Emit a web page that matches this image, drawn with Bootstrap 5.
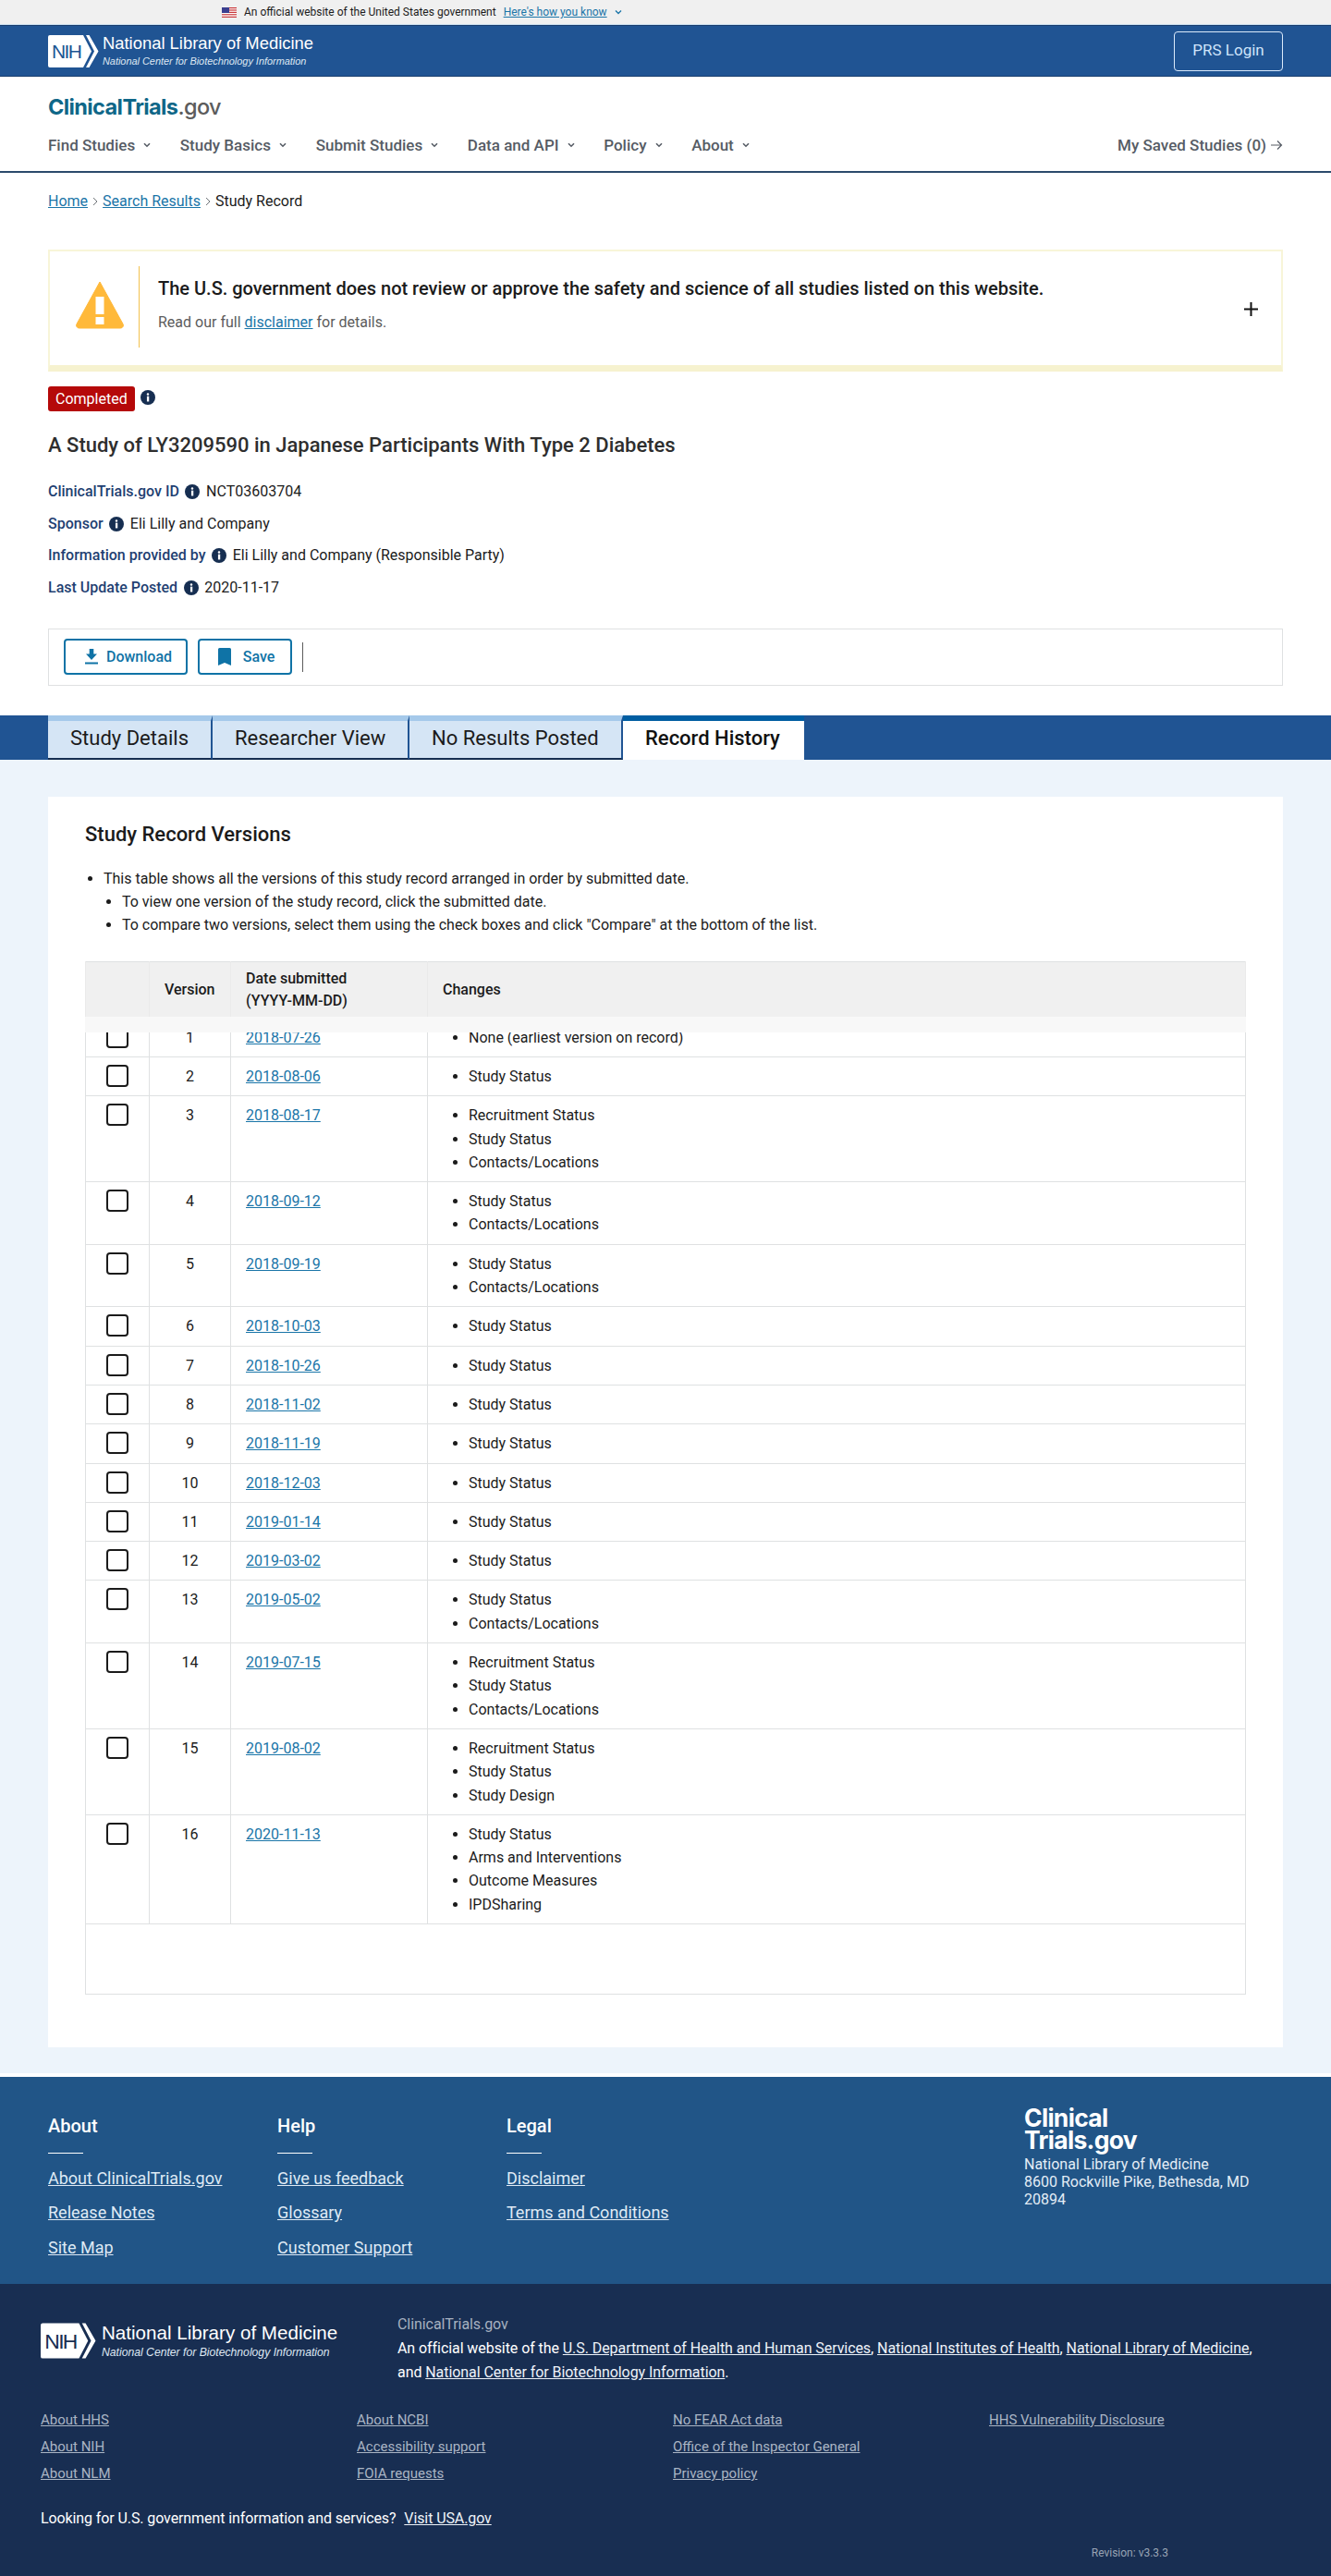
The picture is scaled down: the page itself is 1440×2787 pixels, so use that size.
<!DOCTYPE html>
<html lang="en">
<head>
<meta charset="utf-8">
<title>ClinicalTrials.gov Record History</title>
<link href="https://cdn.jsdelivr.net/npm/bootstrap@5.3.0/dist/css/bootstrap.min.css" rel="stylesheet">
<style>
body{font-family:Roboto,"Liberation Sans",sans-serif;font-size:16px;line-height:24px;color:#1b1b1b;background:#fff}
a{color:#1a75a8}
ul{list-style-type:disc}
.gov-strip{height:27px;background:#f0f0f0;border-bottom:1px solid #cfe3f2;padding-left:240px;font-size:12px;color:#1b1b1b;gap:8px}
.nlm-bar{height:56px;background:#205493;border-top:1px solid #1a3f6f;border-bottom:1px solid #1a3f6f;padding:0 52px}
.logo-title{font-family:"Liberation Sans",Arial,sans-serif;color:#fff;line-height:1}
.logo-top .logo-title{font-size:18.4px}
.logo-top .logo-sub{font-size:10.9px;margin-top:4px}
.logo-sub{font-family:"Liberation Sans",Arial,sans-serif;font-style:italic;color:#dfe8f2;line-height:1}
.logo-bot .logo-title{font-size:20.6px}
.logo-bot .logo-sub{font-size:12.2px;margin-top:4px}
.prs-btn{width:118px;height:43px;border:1px solid #dbeafb;border-radius:4px;color:#cfe4fa;background:transparent;padding:0;font-size:17px}
.site-head{height:104px;border-bottom:2px solid #2b4a6c;padding:17px 52px 0}
.brand-line{font-family:Inter,"Open Sans",sans-serif;font-size:23.5px;line-height:32px;font-weight:700;letter-spacing:-.6px;color:#0f6788}
.brand-line span{color:#5c5c5c;font-weight:500}
.main-menu{margin-top:9px;height:32px;font-size:17px;font-weight:500;color:#565c65}
.main-menu .menu-item{margin-right:31.7px;gap:9px}
.saved{font-weight:500;color:#565c65}
.crumbs{padding:19px 52px 0;height:43px;gap:5px}
.notice{margin:40px 52px 0;height:132px;border:2px solid #f8f5d8;border-bottom:7px solid #f6f2cf;padding:16px 25px 0 28px}
.notice-icon{flex:none}
.notice-div{width:1px;height:88px;background:#f2c14e;margin:0 20px 0 16px}
.notice-title{font-size:20px;font-weight:500;margin-top:12px;color:#1b1b1b}
.notice-sub{color:#5c5c5c;margin-top:13px}
.notice-plus{align-self:center;margin-top:-14px}
.status-wrap{margin:16px 52px 0;gap:6px}
.status-chip{height:27px;padding:0 8px;background:#b50909;color:#fff;border-radius:3px;line-height:27px}
.status-wrap svg{margin-top:-4px}
.study-title{font-size:22px;font-weight:500;line-height:30px;margin:22px 52px 23px;color:#2e2e2e}
.meta-list{margin:0 52px;gap:10.6px}
.meta-label{font-weight:500;color:#1f3f72}
.meta-row{gap:6px}
.meta-row svg{margin:0 .6px}
.action-box{margin:32px 52px 0;height:62px;border:1px solid #dfe1e2;padding:10px 16px;gap:11px}
.act-btn{height:39px;border:2px solid #0f73a6;border-radius:4px;color:#0f73a6;font-weight:500;background:#fff;padding:0;gap:9px}
.act-one{width:134px;padding-left:6px}
.act-two{width:102px;gap:13px;padding-left:3px}
.act-rule{width:1px;height:32px;background:#5c5c5c}
.tabs-band{margin-top:32px;height:48px;background:#205493;padding-left:52px}
.tabs-band .nav-link{height:48px;padding:0 24px;font-size:22px;line-height:38px;color:#1b1b1b;background:#d5e5f5;border-top:6px solid #a5c9ea;border-bottom:2px solid #162e51;border-right:2px solid #205493;border-radius:0;white-space:nowrap}
.tabs-band .nav-link.active{font-weight:500;background:#fff;border-top-color:#005ea2;border-bottom:0;border-right:0;color:#111;width:196px;padding:0 24px}
.tab-a{width:178px}.tab-b{width:213px}.tab-c{width:231px}
.panel-area{background:#edf4fb;padding:40px 52px 28px;margin-bottom:4px}
.sheet{background:#fff;padding:26px 40px 57px}
.sheet h2{font-size:22px;line-height:30px;font-weight:500;margin:0 0 20px;color:#1b1b1b}
.intro{padding-left:20px;margin:0 0 26px;line-height:25.3px}
.intro ul{padding-left:20px;margin:0}
.table-holder{position:relative}
.head-veil{position:absolute;left:0;right:0;top:60px;height:17px;background:#f8f8f8;z-index:2}
.versions{table-layout:fixed;width:100%;margin:0;border-color:#dfe1e2;--bs-table-border-color:#dfe1e2;line-height:25.3px}
.versions thead th{height:60px;padding:6px 16px;background:#f0f0f0;font-weight:500;vertical-align:middle;line-height:24px;border-color:#eaeaea;color:#1b1b1b}
.versions td{padding:8px 16px;vertical-align:top;color:#1b1b1b}
.c-a{width:69px}.c-b{width:88px}.c-c{width:213px}
.versions td.num{text-align:center}
.versions td.pick{padding:8px 0;text-align:center}
.versions ul{padding-left:28px;margin:0}
.tick{width:24px;height:24px;margin:0 auto;border:2px solid #1b1b1b;border-radius:4px;display:block}
.versions .tail{height:76px;padding:0}
.foot-top{height:224px;background:#215587;padding:32px 52px 0}
.foot-col{width:248px;padding-top:7px}
.foot-col h3{font-size:20px;font-weight:500;line-height:28px;margin:0;color:#fff}
.foot-rule{width:38px;height:1px;background:#fff;margin:15px 0 14px}
.foot-col a{display:block;font-size:18px;line-height:26px;margin-bottom:11.5px;color:#dfeaf5}
.foot-addr{width:280px;margin-left:auto;color:#e4edf6}
.foot-brand{font-family:Inter,"Open Sans",sans-serif;font-size:26.5px;line-height:24px;font-weight:700;letter-spacing:-.7px;color:#fff;margin-bottom:5px}
.foot-addr p{line-height:19.2px;margin:0}
.foot-bottom{height:317px;background:#182e52;padding-top:31px;color:#fff}
.fb-top{padding-left:44px}
.fb-logo{width:386px;margin-top:11px;gap:6px}
.fb-logo svg{flex:none}
.fb-text{width:945px;line-height:26px;letter-spacing:-.07px}
.fb-muted{color:#a6b1c0}
.fb-text a{color:#eef3f9}
.fb-links{margin:27px 28px 0 44px}
.fb-links a{display:block;font-size:15px;line-height:22px;margin-bottom:7px;color:#aab5c4}
.fb-usa{padding-left:44px;margin-top:19px;letter-spacing:-.1px}
.fb-usa a{color:#eef3f9;margin-left:5px}
.fb-rev{font-size:12px;line-height:18px;color:#98a4b4;text-align:right;padding-right:176px;margin-top:16px}
</style>
</head>
<body>
<div class="gov-strip d-flex align-items-center">
  <svg width="16" height="11" viewBox="0 0 16 11"><rect width="16" height="11" fill="#fff"/><g fill="#c8373a"><rect width="16" height="1.2"/><rect y="2.4" width="16" height="1.2"/><rect y="4.8" width="16" height="1.2"/><rect y="7.2" width="16" height="1.2"/><rect y="9.8" width="16" height="1.2"/></g><rect width="8" height="6" fill="#3c3f8f"/></svg>
  <span>An official website of the United States government</span>
  <a href="#">Here's how you know</a>
  <svg width="8" height="6" viewBox="0 0 8 6"><path d="M1 1.5l3 3 3-3" fill="none" stroke="#1a75a8" stroke-width="1.3"/></svg>
</div>
<header class="nlm-bar d-flex align-items-center justify-content-between">
  <div class="logo-top d-flex align-items-center gap-1">
    <svg width="55" height="35" viewBox="0 0 55 35"><path d="M2 0h36l9 17.5-9 17.5H2a2 2 0 0 1-2-2V2a2 2 0 0 1 2-2z" fill="#fff"/><path d="M41 0h3.5l10 17.5-10 17.5H41l9-17.5z" fill="#fff"/><text x="4" y="25" font-family="Liberation Sans, Arial, sans-serif" font-size="21" fill="#205493" textLength="33">NIH</text></svg>
    <div>
      <div class="logo-title">National Library of Medicine</div>
      <div class="logo-sub">National Center for Biotechnology Information</div>
    </div>
  </div>
  <button class="btn prs-btn" type="button">PRS Login</button>
</header>
<div class="site-head">
  <div class="brand-line">ClinicalTrials<span>.gov</span></div>
  <nav class="main-menu d-flex align-items-center">
    <div class="menu-item d-flex align-items-center">Find Studies <svg width="8" height="6" viewBox="0 0 8 6"><path d="M1 1.2l3 3 3-3" fill="none" stroke="#565c65" stroke-width="1.6"/></svg></div>
    <div class="menu-item d-flex align-items-center">Study Basics <svg width="8" height="6" viewBox="0 0 8 6"><path d="M1 1.2l3 3 3-3" fill="none" stroke="#565c65" stroke-width="1.6"/></svg></div>
    <div class="menu-item d-flex align-items-center">Submit Studies <svg width="8" height="6" viewBox="0 0 8 6"><path d="M1 1.2l3 3 3-3" fill="none" stroke="#565c65" stroke-width="1.6"/></svg></div>
    <div class="menu-item d-flex align-items-center">Data and API <svg width="8" height="6" viewBox="0 0 8 6"><path d="M1 1.2l3 3 3-3" fill="none" stroke="#565c65" stroke-width="1.6"/></svg></div>
    <div class="menu-item d-flex align-items-center">Policy <svg width="8" height="6" viewBox="0 0 8 6"><path d="M1 1.2l3 3 3-3" fill="none" stroke="#565c65" stroke-width="1.6"/></svg></div>
    <div class="menu-item d-flex align-items-center">About <svg width="8" height="6" viewBox="0 0 8 6"><path d="M1 1.2l3 3 3-3" fill="none" stroke="#565c65" stroke-width="1.6"/></svg></div>
    <div class="saved ms-auto d-flex align-items-center">My Saved Studies (0)<svg width="14" height="12" viewBox="0 0 14 12" class="ms-1"><path d="M1 6h11M8 1.5 12.5 6 8 10.5" fill="none" stroke="#565c65" stroke-width="1.2"/></svg></div>
  </nav>
</div>
<div class="crumbs d-flex align-items-center">
  <a href="#">Home</a>
  <svg width="6" height="10" viewBox="0 0 6 10"><path d="M1 1l4 4-4 4" fill="none" stroke="#71767a" stroke-width="1"/></svg>
  <a href="#">Search Results</a>
  <svg width="6" height="10" viewBox="0 0 6 10"><path d="M1 1l4 4-4 4" fill="none" stroke="#71767a" stroke-width="1"/></svg>
  <span>Study Record</span>
</div>
<section class="notice d-flex align-items-start">
  <svg class="mt-3 notice-icon" width="52" height="52" viewBox="0 0 52 52"><path d="M26 1 51 46.5a3 3 0 0 1-2.6 4.5H3.6A3 3 0 0 1 1 46.5L26 1z" fill="#ffb93a" stroke="#ffb93a" stroke-linejoin="round"/><rect x="21.5" y="17" width="9" height="19" fill="#fff"/><rect x="21.5" y="39" width="9" height="8" fill="#fff"/></svg>
  <div class="notice-div"></div>
  <div>
    <div class="notice-title">The U.S. government does not review or approve the safety and science of all studies listed on this website.</div>
    <div class="notice-sub">Read our full <a href="#">disclaimer</a> for details.</div>
  </div>
  <svg class="notice-plus ms-auto" width="15" height="15" viewBox="0 0 15 15"><path d="M7.5 0v15M0 7.5h15" stroke="#111" stroke-width="2"/></svg>
</section>
<div class="status-wrap d-flex align-items-center">
  <span class="status-chip">Completed</span>
  <svg width="16" height="16" viewBox="0 0 18 18"><circle cx="9" cy="9" r="9" fill="#162e51"/><circle cx="9" cy="5" r="1.4" fill="#fff"/><rect x="7.8" y="7.5" width="2.6" height="6.5" fill="#fff"/></svg>
</div>
<h1 class="study-title">A Study of LY3209590 in Japanese Participants With Type 2 Diabetes</h1>
<div class="meta-list d-flex flex-column">
  <div class="meta-row d-flex align-items-center"><span class="meta-label">ClinicalTrials.gov ID</span><svg width="16" height="16" viewBox="0 0 18 18"><circle cx="9" cy="9" r="9" fill="#162e51"/><circle cx="9" cy="5" r="1.4" fill="#fff"/><rect x="7.8" y="7.5" width="2.6" height="6.5" fill="#fff"/></svg><span>NCT03603704</span></div>
  <div class="meta-row d-flex align-items-center"><span class="meta-label">Sponsor</span><svg width="16" height="16" viewBox="0 0 18 18"><circle cx="9" cy="9" r="9" fill="#162e51"/><circle cx="9" cy="5" r="1.4" fill="#fff"/><rect x="7.8" y="7.5" width="2.6" height="6.5" fill="#fff"/></svg><span>Eli Lilly and Company</span></div>
  <div class="meta-row d-flex align-items-center"><span class="meta-label">Information provided by</span><svg width="16" height="16" viewBox="0 0 18 18"><circle cx="9" cy="9" r="9" fill="#162e51"/><circle cx="9" cy="5" r="1.4" fill="#fff"/><rect x="7.8" y="7.5" width="2.6" height="6.5" fill="#fff"/></svg><span>Eli Lilly and Company (Responsible Party)</span></div>
  <div class="meta-row d-flex align-items-center"><span class="meta-label">Last Update Posted</span><svg width="16" height="16" viewBox="0 0 18 18"><circle cx="9" cy="9" r="9" fill="#162e51"/><circle cx="9" cy="5" r="1.4" fill="#fff"/><rect x="7.8" y="7.5" width="2.6" height="6.5" fill="#fff"/></svg><span>2020-11-17</span></div>
</div>
<div class="action-box d-flex align-items-center">
  <button class="btn act-btn act-one d-flex align-items-center justify-content-center" type="button"><svg width="14" height="17" viewBox="0 0 14 17"><path d="M4.7 0h4.6v5.5H13L7 12 1 5.5h3.7z" fill="#0f73a6"/><rect x="0" y="14.5" width="14" height="2" fill="#0f73a6"/></svg>Download</button>
  <button class="btn act-btn act-two d-flex align-items-center justify-content-center" type="button"><svg width="14" height="19" viewBox="0 0 14 19"><path d="M0 1.5A1.5 1.5 0 0 1 1.5 0h11A1.5 1.5 0 0 1 14 1.5V19l-7-3-7 3z" fill="#0f73a6"/></svg>Save</button>
  <div class="act-rule"></div>
</div>
<ul class="nav tabs-band">
  <li class="nav-item"><a class="nav-link tab-a" href="#">Study Details</a></li>
  <li class="nav-item"><a class="nav-link tab-b" href="#">Researcher View</a></li>
  <li class="nav-item"><a class="nav-link tab-c" href="#">No Results Posted</a></li>
  <li class="nav-item"><a class="nav-link active" href="#">Record History</a></li>
</ul>
<main class="panel-area">
  <div class="sheet">
    <h2>Study Record Versions</h2>
    <ul class="intro">
      <li>This table shows all the versions of this study record arranged in order by submitted date.
        <ul>
          <li>To view one version of the study record, click the submitted date.</li>
          <li>To compare two versions, select them using the check boxes and click "Compare" at the bottom of the list.</li>
        </ul>
      </li>
    </ul>
    <div class="table-holder">
      <div class="head-veil"></div>
      <table class="table table-bordered versions">
        <thead><tr><th class="c-a"></th><th class="c-b">Version</th><th class="c-c">Date submitted<br>(YYYY-MM-DD)</th><th>Changes</th></tr></thead>
        <tbody>
          <tr><td class="pick"><input class="form-check-input tick" type="checkbox"></td><td class="num">1</td><td><a href="#">2018-07-26</a></td><td><ul><li>None (earliest version on record)</li></ul></td></tr>
          <tr><td class="pick"><input class="form-check-input tick" type="checkbox"></td><td class="num">2</td><td><a href="#">2018-08-06</a></td><td><ul><li>Study Status</li></ul></td></tr>
          <tr><td class="pick"><input class="form-check-input tick" type="checkbox"></td><td class="num">3</td><td><a href="#">2018-08-17</a></td><td><ul><li>Recruitment Status</li><li>Study Status</li><li>Contacts/Locations</li></ul></td></tr>
          <tr><td class="pick"><input class="form-check-input tick" type="checkbox"></td><td class="num">4</td><td><a href="#">2018-09-12</a></td><td><ul><li>Study Status</li><li>Contacts/Locations</li></ul></td></tr>
          <tr><td class="pick"><input class="form-check-input tick" type="checkbox"></td><td class="num">5</td><td><a href="#">2018-09-19</a></td><td><ul><li>Study Status</li><li>Contacts/Locations</li></ul></td></tr>
          <tr><td class="pick"><input class="form-check-input tick" type="checkbox"></td><td class="num">6</td><td><a href="#">2018-10-03</a></td><td><ul><li>Study Status</li></ul></td></tr>
          <tr><td class="pick"><input class="form-check-input tick" type="checkbox"></td><td class="num">7</td><td><a href="#">2018-10-26</a></td><td><ul><li>Study Status</li></ul></td></tr>
          <tr><td class="pick"><input class="form-check-input tick" type="checkbox"></td><td class="num">8</td><td><a href="#">2018-11-02</a></td><td><ul><li>Study Status</li></ul></td></tr>
          <tr><td class="pick"><input class="form-check-input tick" type="checkbox"></td><td class="num">9</td><td><a href="#">2018-11-19</a></td><td><ul><li>Study Status</li></ul></td></tr>
          <tr><td class="pick"><input class="form-check-input tick" type="checkbox"></td><td class="num">10</td><td><a href="#">2018-12-03</a></td><td><ul><li>Study Status</li></ul></td></tr>
          <tr><td class="pick"><input class="form-check-input tick" type="checkbox"></td><td class="num">11</td><td><a href="#">2019-01-14</a></td><td><ul><li>Study Status</li></ul></td></tr>
          <tr><td class="pick"><input class="form-check-input tick" type="checkbox"></td><td class="num">12</td><td><a href="#">2019-03-02</a></td><td><ul><li>Study Status</li></ul></td></tr>
          <tr><td class="pick"><input class="form-check-input tick" type="checkbox"></td><td class="num">13</td><td><a href="#">2019-05-02</a></td><td><ul><li>Study Status</li><li>Contacts/Locations</li></ul></td></tr>
          <tr><td class="pick"><input class="form-check-input tick" type="checkbox"></td><td class="num">14</td><td><a href="#">2019-07-15</a></td><td><ul><li>Recruitment Status</li><li>Study Status</li><li>Contacts/Locations</li></ul></td></tr>
          <tr><td class="pick"><input class="form-check-input tick" type="checkbox"></td><td class="num">15</td><td><a href="#">2019-08-02</a></td><td><ul><li>Recruitment Status</li><li>Study Status</li><li>Study Design</li></ul></td></tr>
          <tr><td class="pick"><input class="form-check-input tick" type="checkbox"></td><td class="num">16</td><td><a href="#">2020-11-13</a></td><td><ul><li>Study Status</li><li>Arms and Interventions</li><li>Outcome Measures</li><li>IPDSharing</li></ul></td></tr>
        </tbody>
        <tfoot><tr><td class="tail" colspan="4"></td></tr></tfoot>
      </table>
    </div>
  </div>
</main>
<footer>
  <div class="foot-top d-flex">
    <div class="foot-col"><h3>About</h3><div class="foot-rule"></div><a href="#">About ClinicalTrials.gov</a><a href="#">Release Notes</a><a href="#">Site Map</a></div>
    <div class="foot-col"><h3>Help</h3><div class="foot-rule"></div><a href="#">Give us feedback</a><a href="#">Glossary</a><a href="#">Customer Support</a></div>
    <div class="foot-col"><h3>Legal</h3><div class="foot-rule"></div><a href="#">Disclaimer</a><a href="#">Terms and Conditions</a></div>
    <div class="foot-addr">
      <div class="foot-brand">Clinical<br>Trials.gov</div>
      <p>National Library of Medicine</p>
      <p>8600 Rockville Pike, Bethesda, MD 20894</p>
    </div>
  </div>
  <div class="foot-bottom">
    <div class="fb-top d-flex align-items-start">
      <div class="fb-logo logo-bot d-flex align-items-center">
        <svg width="60" height="39" viewBox="0 0 55 35"><path d="M2 0h36l9 17.5-9 17.5H2a2 2 0 0 1-2-2V2a2 2 0 0 1 2-2z" fill="#fff"/><path d="M41 0h3.5l10 17.5-10 17.5H41l9-17.5z" fill="#fff"/><text x="4" y="25" font-family="Liberation Sans, Arial, sans-serif" font-size="21" fill="#182e52" textLength="33">NIH</text></svg>
        <div><div class="logo-title">National Library of Medicine</div><div class="logo-sub">National Center for Biotechnology Information</div></div>
      </div>
      <div class="fb-text">
        <div class="fb-muted">ClinicalTrials.gov</div>
        <div>An official website of the <a href="#">U.S. Department of Health and Human Services</a>, <a href="#">National Institutes of Health</a>, <a href="#">National Library of Medicine</a>, and <a href="#">National Center for Biotechnology Information</a>.</div>
      </div>
    </div>
    <div class="row g-0 fb-links">
      <div class="col-3"><a href="#">About HHS</a><a href="#">About NIH</a><a href="#">About NLM</a></div>
      <div class="col-3"><a href="#">About NCBI</a><a href="#">Accessibility support</a><a href="#">FOIA requests</a></div>
      <div class="col-3"><a href="#">No FEAR Act data</a><a href="#">Office of the Inspector General</a><a href="#">Privacy policy</a></div>
      <div class="col-3"><a href="#">HHS Vulnerability Disclosure</a></div>
    </div>
    <div class="fb-usa">Looking for U.S. government information and services? <a href="#">Visit USA.gov</a></div>
    <div class="fb-rev">Revision: v3.3.3</div>
  </div>
</footer>
<script src="https://cdn.jsdelivr.net/npm/bootstrap@5.3.0/dist/js/bootstrap.bundle.min.js"></script>
</body>
</html>
